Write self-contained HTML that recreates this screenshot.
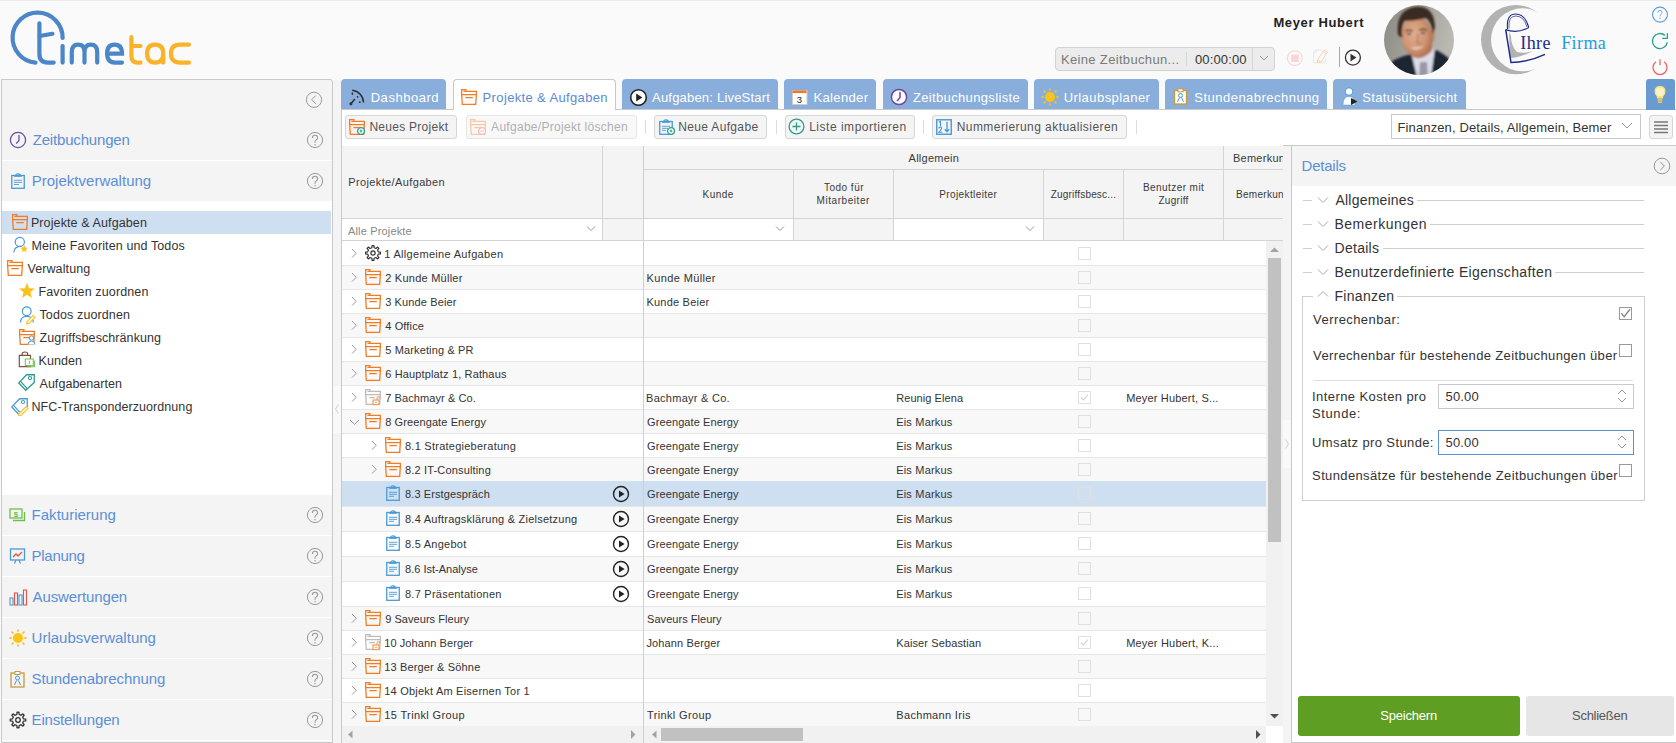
<!DOCTYPE html><html><head><meta charset="utf-8"><style>
*{box-sizing:border-box;margin:0;padding:0}
html,body{width:1676px;height:743px;overflow:hidden;background:#fafafa;font-family:"Liberation Sans",sans-serif;color:#333;position:relative}
.a{position:absolute}
.t{position:absolute;white-space:nowrap;line-height:1}
svg{position:absolute;overflow:visible}
</style></head><body><div class="a" style="left:0px;top:0px;width:1676px;height:1px;background:#ececec"></div><svg style="left:0px;top:0px" width="200" height="75" viewBox="0 0 200 75"><g fill="none" stroke-linecap="round" stroke-width="4.2">
<path d="M35.5 62.6 A25 25 0 1 1 62.6 38" stroke="#4a86c8"/>
<path d="M39.4 23.3 V54 Q39.4 62.6 48 62.6 H53.7" stroke="#4a86c8"/>
<path d="M39.6 36 L52.5 33.8" stroke="#4a86c8"/>
<path d="M62.6 46 V62.6" stroke="#4a86c8"/>
<path d="M71.8 62.6 V52 Q71.8 44.6 78.2 44.6 Q84.5 44.6 84.5 52 V62.6 M84.5 52 Q84.5 44.6 90.8 44.6 Q97.2 44.6 97.2 52 V62.6" stroke="#4a86c8"/>
<path d="M107.2 53.6 H122 Q122 44.6 114.6 44.6 Q107.1 44.6 107.1 53.6 Q107.1 62.6 115 62.6 H122" stroke="#4a86c8"/>
<path d="M131.4 37.2 V56 Q131.4 62.6 138 62.6 H140.5 M131.4 46 H140.5" stroke="#fbb22b"/>
<path d="M163.2 53.6 Q163.2 44.6 155.2 44.6 Q147.1 44.6 147.1 53.6 Q147.1 62.6 155.2 62.6 Q163.2 62.6 163.2 53.6 V62.6" stroke="#fbb22b"/>
<path d="M189 44.6 H180 Q171 44.6 171 53.6 Q171 62.6 180 62.6 H189" stroke="#fbb22b"/>
</g></svg><div class="t" style="left:1273.40px;top:15.99px;font-size:13px;color:#222;font-weight:bold;letter-spacing:0.636px;">Meyer Hubert</div><div class="a" style="left:1055px;top:47px;width:220px;height:24px;background:#ececec;border:1px solid #d2d2d2;border-radius:4px"></div><div class="a" style="left:1186px;top:52px;width:1px;height:14px;background:#d6d6d6"></div><div class="a" style="left:1252px;top:48px;width:1px;height:22px;background:#d6d6d6"></div><div class="t" style="left:1061.00px;top:52.99px;font-size:13px;color:#7a7a7a;font-weight:normal;letter-spacing:0.333px;">Keine Zeitbuchun...</div><div class="t" style="left:1195.00px;top:52.99px;font-size:13px;color:#333;font-weight:normal;letter-spacing:0.143px;">00:00:00</div><svg style="left:1257px;top:51px" width="14" height="14" viewBox="0 0 14 14"><path d="M3 5 L7 9 L11 5" fill="none" stroke="#999" stroke-width="1"/></svg><svg style="left:1286px;top:50px" width="17" height="17" viewBox="0 0 17 17"><circle cx="8.8" cy="8.2" r="7.4" fill="none" stroke="#f8d3d6" stroke-width="1.1"/><rect x="5.2" y="4.6" width="7.6" height="7.4" fill="#f7d6d9"/></svg><svg style="left:1312px;top:49px" width="17" height="17" viewBox="0 0 17 17"><path d="M1.7 13.8 V3.2 L4 1 H9.5 M1.7 3.2 H4 V1 M1.7 13.8 H13.6 V9.5" fill="none" stroke="#e8e8e8" stroke-width="1"/><path d="M5.2 13.5 L5.6 10.8 L12 1 L15.4 3.2 L9 13 Z M5.6 10.8 L9 13 M11 2.6 L14.4 4.8" fill="none" stroke="#f8cfae" stroke-width="0.9"/></svg><div class="a" style="left:1339px;top:47px;width:1px;height:20px;background:#a8a8a8"></div><svg style="left:1344px;top:49px" width="18" height="18" viewBox="0 0 18 18"><circle cx="8.9" cy="8.6" r="7.5" fill="none" stroke="#333" stroke-width="1.3"/><path d="M6.5 4.8 L12.4 8.6 L6.5 12.4 Z" fill="#333"/></svg><svg style="left:1384px;top:5px" width="70" height="70" viewBox="0 0 70 70"><defs><clipPath id="avc"><circle cx="35" cy="35" r="35"/></clipPath>
<filter id="blr" x="-20%" y="-20%" width="140%" height="140%"><feGaussianBlur stdDeviation="0.9"/></filter>
<linearGradient id="avbg" x1="0" y1="0" x2="1" y2="0.3"><stop offset="0" stop-color="#8a8982"/><stop offset="0.55" stop-color="#a5a49c"/><stop offset="1" stop-color="#b9b8b1"/></linearGradient>
<radialGradient id="skin" cx="0.42" cy="0.42" r="0.65"><stop offset="0" stop-color="#e2ae8e"/><stop offset="0.6" stop-color="#cf9472"/><stop offset="1" stop-color="#a76a4e"/></radialGradient></defs>
<g clip-path="url(#avc)"><rect width="70" height="70" fill="url(#avbg)"/>
<g filter="url(#blr)">
<path d="M0 72 L4 60 Q10 53 27 49 L35 62 L50 44 Q64 50 70 60 L70 72 Z" fill="#1d2631"/>
<path d="M27 47 L33 72 L47 72 L51 43 Q40 50 27 47 Z" fill="#dadde7"/>
<path d="M36 57 L43 57 L44 72 L35 72 Z" fill="#9a97a9"/>
<path d="M29 42 L29 52 Q38 56 48 46 L48 36 Z" fill="#b97a5a"/>
<ellipse cx="47.5" cy="31" rx="3" ry="6" fill="#c08264"/>
<ellipse cx="33" cy="32" rx="15.5" ry="20.5" fill="url(#skin)" transform="rotate(-8 33 32)"/>
<path d="M14 30 Q11 6 30 2 Q50 -1 51 22 L49 29 Q47 16 42 13 Q32 16 20 16 Q17 22 18.5 33 Z" fill="#3b2a20"/>
<path d="M21 26 Q25 24.5 29 26 M35 25 Q39 23.5 43 25" stroke="#4a3325" stroke-width="1.3" fill="none"/>
<ellipse cx="25" cy="29" rx="2.2" ry="1.1" fill="#3a4a6e"/><ellipse cx="39" cy="28" rx="2.2" ry="1.1" fill="#3a4a6e"/>
<path d="M34 29 L33 38 Q35 40 37 38" stroke="#a86a4c" stroke-width="1" fill="none"/>
<path d="M26 42 Q33 47 40 41 Q33 43.5 26 42 Z" fill="#f1e3dc"/>
</g></g></svg><svg style="left:1475px;top:0px" width="140" height="80" viewBox="0 0 140 80"><defs><mask id="mm"><rect width="140" height="80" fill="#fff"/><circle cx="47.5" cy="39.8" r="31.5" fill="#000"/></mask></defs>
<circle cx="40.7" cy="39.6" r="34.7" fill="#b2b2b2" mask="url(#mm)"/>
<path d="M35 58 Q45 58 58 51 Q50 54 42 52 Q36 46 36 36 L34 32 Z" fill="#b2b2b2"/>
<path d="M32.5 29 Q31 14 40.8 14 Q50 14 53.8 27.5" fill="none" stroke="#1c2a8a" stroke-width="1.1"/>
<path d="M34 28.5 Q33 16 40.8 16 Q49 16 52 27" fill="none" stroke="#1c2a8a" stroke-width="0.7"/>
<path d="M30.7 29.6 Q42 34 53.8 27.5" fill="none" stroke="#1c2a8a" stroke-width="1.3"/>
<path d="M30.7 29.6 L36 62.5 Q54 62 70 54.4" fill="none" stroke="#1c2a8a" stroke-width="1.5"/></svg><div class="t" style="left:1520.30px;top:33.75px;font-size:18px;color:#1c2a8a;font-weight:normal;letter-spacing:0.367px;font-family:'Liberation Serif',serif;">Ihre</div><div class="t" style="left:1561.20px;top:33.75px;font-size:18px;color:#1aa0e0;font-weight:normal;letter-spacing:0.400px;font-family:'Liberation Serif',serif;">Firma</div><svg style="left:1651px;top:6px" width="18" height="18" viewBox="0 0 18 18"><circle cx="9" cy="8.6" r="7.5" fill="none" stroke="#5a9fde" stroke-width="1.1"/><path d="M6.9 6.6 Q6.9 4.4 9 4.4 Q11.1 4.4 11.1 6.4 Q11.1 7.6 9.9 8.3 Q9 8.8 9 10 V10.4" fill="none" stroke="#7ab2e6" stroke-width="1"/><circle cx="9" cy="12.2" r="0.7" fill="#7ab2e6"/></svg><svg style="left:1651px;top:32px" width="18" height="18" viewBox="0 0 18 18"><path d="M16.3 10.3 A7.5 7.5 0 1 1 14 3.5" fill="none" stroke="#2a9d8f" stroke-width="1.3"/><path d="M16.4 1.3 V6.4 H11.2" fill="none" stroke="#2a9d8f" stroke-width="1.3"/></svg><svg style="left:1651px;top:58px" width="18" height="18" viewBox="0 0 18 18"><path d="M5 3.8 A7 7 0 1 0 13 3.8" fill="none" stroke="#ea6a6a" stroke-width="1.3"/><path d="M9 1.2 V7.2" stroke="#ea6a6a" stroke-width="1.3"/></svg><div class="a" style="left:1px;top:79px;width:332px;height:664px;background:#f4f4f4;border:1px solid #c9c9c9;border-radius:0 3px 0 0"></div><svg style="left:305px;top:91px" width="18" height="18" viewBox="0 0 18 18"><circle cx="9" cy="8.8" r="7.6" fill="none" stroke="#999" stroke-width="1"/><path d="M10.8 4.6 L6.6 8.8 L10.8 13" fill="none" stroke="#999" stroke-width="1"/></svg><svg style="left:9px;top:131px" width="18" height="18" viewBox="0 0 18 18"><circle cx="9" cy="9" r="7.6" fill="none" stroke="#6a4a9e" stroke-width="1.25"/><path d="M10 4 V9.5 L7.2 12.6" fill="none" stroke="#6a4a9e" stroke-width="1.25"/></svg><div class="t" style="left:32.70px;top:132.49px;font-size:15px;color:#5b8fd6;font-weight:normal;letter-spacing:-0.175px;">Zeitbuchungen</div><svg style="left:306px;top:131px" width="18" height="18" viewBox="0 0 18 18"><circle cx="9" cy="9" r="7.6" fill="none" stroke="#999" stroke-width="1"/><path d="M6.4 6.9 Q6.4 4.3 9 4.3 Q11.6 4.3 11.6 6.7 Q11.6 8.2 10 9.1 Q9 9.7 9 11.1 V11.7" fill="none" stroke="#999" stroke-width="1.1"/><circle cx="9" cy="13.7" r="0.75" fill="#999"/></svg><div class="a" style="left:2px;top:160px;width:330px;height:1px;background:#fff"></div><svg style="left:11px;top:173px" width="14" height="16" viewBox="0 0 14 16"><rect x="0.75" y="2.5" width="12.5" height="12.8" fill="none" stroke="#4a9ad8" stroke-width="1.3"/><path d="M3.2 3.2 H10.8" stroke="#4a9ad8" stroke-width="1.3"/><path d="M4.6 3 Q4.6 0.8 7 0.8 Q9.4 0.8 9.4 3" fill="none" stroke="#4a9ad8" stroke-width="1.2"/><path d="M3 7.3 H11 M3 9.4 H11 M3 11.5 H8" stroke="#4a9ad8" stroke-width="0.9"/></svg><div class="t" style="left:31.70px;top:173.49px;font-size:15px;color:#5b8fd6;font-weight:normal;letter-spacing:0.019px;">Projektverwaltung</div><svg style="left:306px;top:172px" width="18" height="18" viewBox="0 0 18 18"><circle cx="9" cy="9" r="7.6" fill="none" stroke="#999" stroke-width="1"/><path d="M6.4 6.9 Q6.4 4.3 9 4.3 Q11.6 4.3 11.6 6.7 Q11.6 8.2 10 9.1 Q9 9.7 9 11.1 V11.7" fill="none" stroke="#999" stroke-width="1.1"/><circle cx="9" cy="13.7" r="0.75" fill="#999"/></svg><div class="a" style="left:2px;top:201px;width:330px;height:294px;background:#fff"></div><div class="a" style="left:2px;top:211px;width:329px;height:23px;background:#cfdff2"></div><svg style="left:12px;top:214px" width="16" height="16" viewBox="0 0 16 16"><g fill="none" stroke="#f47b20" stroke-width="1.3"><path d="M0.65 5 V0.65 H4.9 V2.3"/><path d="M2.4 2.3 H15.35 V5"/><path d="M0.65 5.6 H15.35 L14.7 15.3 H1.3 Z"/><path d="M4.3 8.6 H11.8"/></g></svg><div class="t" style="left:30.90px;top:216.71px;font-size:12.5px;color:#333;font-weight:normal;letter-spacing:0.111px;">Projekte &amp; Aufgaben</div><svg style="left:10px;top:236px" width="20" height="18" viewBox="0 0 20 18"><circle cx="9.8" cy="5.9" r="4.6" fill="none" stroke="#4a9ad8" stroke-width="1.2"/><path d="M3.8 16.4 Q4.3 10.4 11.5 10.2" fill="none" stroke="#4a9ad8" stroke-width="1.2"/><path d="M14.20 8.80 L15.28 11.41 L18.10 11.63 L15.95 13.47 L16.61 16.22 L14.20 14.75 L11.79 16.22 L12.45 13.47 L10.30 11.63 L13.12 11.41 Z" fill="#f9c31f"/></svg><div class="t" style="left:31.50px;top:239.71px;font-size:12.5px;color:#333;font-weight:normal;letter-spacing:0.112px;">Meine Favoriten und Todos</div><svg style="left:7px;top:260px" width="16" height="16" viewBox="0 0 16 16"><g fill="none" stroke="#f47b20" stroke-width="1.3"><path d="M0.65 5 V0.65 H4.9 V2.3"/><path d="M2.4 2.3 H15.35 V5"/><path d="M0.65 5.6 H15.35 L14.7 15.3 H1.3 Z"/><path d="M4.3 8.6 H11.8"/></g></svg><div class="t" style="left:27.40px;top:262.71px;font-size:12.5px;color:#333;font-weight:normal;letter-spacing:0.111px;">Verwaltung</div><svg style="left:18px;top:282px" width="18" height="18" viewBox="0 0 18 18"><path d="M9.00 0.80 L11.12 6.29 L16.99 6.60 L12.42 10.31 L13.94 16.00 L9.00 12.80 L4.06 16.00 L5.58 10.31 L1.01 6.60 L6.88 6.29 Z" fill="#f9c31f"/></svg><div class="t" style="left:38.50px;top:285.71px;font-size:12.5px;color:#333;font-weight:normal;letter-spacing:0.129px;">Favoriten zuordnen</div><svg style="left:18px;top:305px" width="18" height="18" viewBox="0 0 18 18"><circle cx="8.7" cy="6.3" r="4.4" fill="none" stroke="#4a9ad8" stroke-width="1.2"/><path d="M2.6 17.5 Q2.6 11.3 8.7 11.3 Q14.8 11.3 15.3 17.5" fill="none" stroke="#4a9ad8" stroke-width="1.2"/><path d="M9 16.8 L15 10.4 L17 12.2 L11 18.4 L8.6 18.8 Z" fill="#fff" stroke="#f9c31f" stroke-width="1.1"/></svg><div class="t" style="left:39.50px;top:308.71px;font-size:12.5px;color:#333;font-weight:normal;letter-spacing:0.115px;">Todos zuordnen</div><svg style="left:19px;top:329px" width="16" height="16" viewBox="0 0 16 16"><g fill="none" stroke="#f47b20" stroke-width="1.3"><path d="M0.65 5 V0.65 H4.9 V2.3"/><path d="M2.4 2.3 H15.35 V5"/><path d="M0.65 5.6 H15.35 L14.7 15.3 H1.3 Z"/><path d="M4.3 8.6 H11.8"/></g></svg><svg style="left:27px;top:335px" width="10" height="10" viewBox="0 0 10 10"><circle cx="4.5" cy="3" r="2.2" fill="#fff" stroke="#4a9ad8" stroke-width="1"/><path d="M1 9.5 Q1 6 4.5 6 Q8 6 8 9.5" fill="#fff" stroke="#4a9ad8" stroke-width="1"/></svg><div class="t" style="left:39.50px;top:331.71px;font-size:12.5px;color:#333;font-weight:normal;letter-spacing:0.079px;">Zugriffsbeschränkung</div><svg style="left:18px;top:351px" width="18" height="18" viewBox="0 0 18 18"><path d="M1.3 4.3 H12.5 V15.6 H1.3 Z" fill="none" stroke="#7a5243" stroke-width="1.2"/><path d="M4.2 4.3 V2.6 Q4.2 1 6.9 1 Q9.6 1 9.6 2.6 V4.3" fill="none" stroke="#7a5243" stroke-width="1.2"/><rect x="7.3" y="8" width="8" height="6.5" fill="#fff" stroke="#7cc35a" stroke-width="1.1"/><path d="M9 15.8 H16.6 V9.5" fill="none" stroke="#7cc35a" stroke-width="1.1"/><path d="M11.3 9.5 V13" stroke="#7cc35a" stroke-width="1"/></svg><div class="t" style="left:38.50px;top:354.71px;font-size:12.5px;color:#333;font-weight:normal;letter-spacing:0.080px;">Kunden</div><svg style="left:18px;top:374px" width="18" height="18" viewBox="0 0 18 18"><path d="M8.6 0.75 H16.25 V8.4 L7.7 16.25 L0.75 8.9 Z" fill="none" stroke="#2a9d8f" stroke-width="1.3"/><path d="M2.3 7.1 L9.2 14.6" stroke="#2a9d8f" stroke-width="1.2"/><circle cx="12" cy="4.1" r="1.6" fill="none" stroke="#2a9d8f" stroke-width="1.1"/></svg><div class="t" style="left:39.50px;top:377.71px;font-size:12.5px;color:#333;font-weight:normal;letter-spacing:0.042px;">Aufgabenarten</div><svg style="left:11px;top:398px" width="18" height="18" viewBox="0 0 18 18"><path d="M8.6 0.75 H16.25 V8.4 L7.7 16.25 L0.75 8.9 Z" fill="none" stroke="#4a9ad8" stroke-width="1.3"/><path d="M2.3 7.1 L9.2 14.6" stroke="#4a9ad8" stroke-width="1.2"/><circle cx="12" cy="4.1" r="1.6" fill="none" stroke="#4a9ad8" stroke-width="1.1"/><path d="M8 15.6 L15.2 8.6 L17 10.4 L9.8 17.4 L7.7 17.7 Z" fill="#fff" stroke="#f9c31f" stroke-width="1.1"/></svg><div class="t" style="left:31.50px;top:400.71px;font-size:12.5px;color:#333;font-weight:normal;letter-spacing:0.065px;">NFC-Transponderzuordnung</div><div class="t" style="left:31.60px;top:507.19px;font-size:15px;color:#5b8fd6;font-weight:normal;letter-spacing:0.009px;">Fakturierung</div><svg style="left:306px;top:505.5px" width="18" height="18" viewBox="0 0 18 18"><circle cx="9" cy="9" r="7.6" fill="none" stroke="#999" stroke-width="1"/><path d="M6.4 6.9 Q6.4 4.3 9 4.3 Q11.6 4.3 11.6 6.7 Q11.6 8.2 10 9.1 Q9 9.7 9 11.1 V11.7" fill="none" stroke="#999" stroke-width="1.1"/><circle cx="9" cy="13.7" r="0.75" fill="#999"/></svg><svg style="left:9px;top:505.5px" width="18" height="18" viewBox="0 0 18 18"><rect x="1" y="3" width="12" height="9" fill="none" stroke="#6cc04a" stroke-width="1.3"/><path d="M4 14.5 H15.5 V6" fill="none" stroke="#6cc04a" stroke-width="1.3"/><text x="7" y="10.5" font-size="8" text-anchor="middle" fill="#6cc04a" font-family="Liberation Sans" font-weight="bold">$</text></svg><div class="a" style="left:2px;top:535px;width:330px;height:1px;background:#fff"></div><div class="t" style="left:31.60px;top:548.19px;font-size:15px;color:#5b8fd6;font-weight:normal;letter-spacing:-0.283px;">Planung</div><svg style="left:306px;top:546.5px" width="18" height="18" viewBox="0 0 18 18"><circle cx="9" cy="9" r="7.6" fill="none" stroke="#999" stroke-width="1"/><path d="M6.4 6.9 Q6.4 4.3 9 4.3 Q11.6 4.3 11.6 6.7 Q11.6 8.2 10 9.1 Q9 9.7 9 11.1 V11.7" fill="none" stroke="#999" stroke-width="1.1"/><circle cx="9" cy="13.7" r="0.75" fill="#999"/></svg><svg style="left:9px;top:546.5px" width="18" height="18" viewBox="0 0 18 18"><rect x="1.5" y="2" width="14" height="11" fill="none" stroke="#4a9ad8" stroke-width="1.3"/><path d="M4 10 L7 7 L9 9 L13 5" fill="none" stroke="#e5534b" stroke-width="1.3"/><path d="M7 13 L5.5 16.5 M10 13 L11.5 16.5" stroke="#4a9ad8" stroke-width="1.2"/></svg><div class="a" style="left:2px;top:576px;width:330px;height:1px;background:#fff"></div><div class="t" style="left:32.60px;top:589.19px;font-size:15px;color:#5b8fd6;font-weight:normal;letter-spacing:-0.118px;">Auswertungen</div><svg style="left:306px;top:587.5px" width="18" height="18" viewBox="0 0 18 18"><circle cx="9" cy="9" r="7.6" fill="none" stroke="#999" stroke-width="1"/><path d="M6.4 6.9 Q6.4 4.3 9 4.3 Q11.6 4.3 11.6 6.7 Q11.6 8.2 10 9.1 Q9 9.7 9 11.1 V11.7" fill="none" stroke="#999" stroke-width="1.1"/><circle cx="9" cy="13.7" r="0.75" fill="#999"/></svg><svg style="left:9px;top:587.5px" width="18" height="18" viewBox="0 0 18 18"><rect x="1" y="10" width="3" height="7" fill="none" stroke="#4a9ad8" stroke-width="1.1"/><rect x="5.5" y="5" width="3" height="12" fill="none" stroke="#e5534b" stroke-width="1.1"/><rect x="10" y="7" width="3" height="10" fill="none" stroke="#4a9ad8" stroke-width="1.1"/><rect x="14.5" y="2" width="3" height="15" fill="none" stroke="#e5534b" stroke-width="1.1"/></svg><div class="a" style="left:2px;top:617px;width:330px;height:1px;background:#fff"></div><div class="t" style="left:31.60px;top:630.19px;font-size:15px;color:#5b8fd6;font-weight:normal;letter-spacing:0.006px;">Urlaubsverwaltung</div><svg style="left:306px;top:628.5px" width="18" height="18" viewBox="0 0 18 18"><circle cx="9" cy="9" r="7.6" fill="none" stroke="#999" stroke-width="1"/><path d="M6.4 6.9 Q6.4 4.3 9 4.3 Q11.6 4.3 11.6 6.7 Q11.6 8.2 10 9.1 Q9 9.7 9 11.1 V11.7" fill="none" stroke="#999" stroke-width="1.1"/><circle cx="9" cy="13.7" r="0.75" fill="#999"/></svg><svg style="left:9px;top:628.5px" width="18" height="18" viewBox="0 0 18 18"><circle cx="9" cy="9" r="5" fill="#fcc419"/><g stroke="#f5c02a" stroke-width="1.9" stroke-linecap="round"><path d="M9 1.2 V1.9 M9 16.1 V16.8 M1.2 9 H1.9 M16.1 9 H16.8 M3.2 3.2 L3.9 3.9 M14.1 14.1 L14.8 14.8 M3.2 14.8 L3.9 14.1 M14.1 3.9 L14.8 3.2"/></g></svg><div class="a" style="left:2px;top:658px;width:330px;height:1px;background:#fff"></div><div class="t" style="left:31.60px;top:671.19px;font-size:15px;color:#5b8fd6;font-weight:normal;letter-spacing:-0.088px;">Stundenabrechnung</div><svg style="left:306px;top:669.5px" width="18" height="18" viewBox="0 0 18 18"><circle cx="9" cy="9" r="7.6" fill="none" stroke="#999" stroke-width="1"/><path d="M6.4 6.9 Q6.4 4.3 9 4.3 Q11.6 4.3 11.6 6.7 Q11.6 8.2 10 9.1 Q9 9.7 9 11.1 V11.7" fill="none" stroke="#999" stroke-width="1.1"/><circle cx="9" cy="13.7" r="0.75" fill="#999"/></svg><svg style="left:9px;top:669.5px" width="18" height="18" viewBox="0 0 18 18"><rect x="2" y="3" width="13" height="14" fill="none" stroke="#c89a3a" stroke-width="1.3"/><rect x="6" y="1.5" width="5" height="3" fill="#fff" stroke="#c89a3a" stroke-width="1"/><circle cx="8.5" cy="8" r="2" fill="none" stroke="#4a9ad8" stroke-width="1"/><path d="M5.5 15 L7.5 10.5 M11.5 15 L9.5 10.5" stroke="#4a9ad8" stroke-width="1"/></svg><div class="a" style="left:2px;top:699px;width:330px;height:1px;background:#fff"></div><div class="t" style="left:31.60px;top:712.19px;font-size:15px;color:#5b8fd6;font-weight:normal;letter-spacing:-0.167px;">Einstellungen</div><svg style="left:306px;top:710.5px" width="18" height="18" viewBox="0 0 18 18"><circle cx="9" cy="9" r="7.6" fill="none" stroke="#999" stroke-width="1"/><path d="M6.4 6.9 Q6.4 4.3 9 4.3 Q11.6 4.3 11.6 6.7 Q11.6 8.2 10 9.1 Q9 9.7 9 11.1 V11.7" fill="none" stroke="#999" stroke-width="1.1"/><circle cx="9" cy="13.7" r="0.75" fill="#999"/></svg><svg style="left:9px;top:710.5px" width="18" height="18" viewBox="0 0 18 18"><path d="M7.85 3.52 L8.04 1.26 L9.96 1.26 L10.15 3.52 L12.07 4.31 L13.79 2.85 L15.15 4.21 L13.69 5.93 L14.48 7.85 L16.74 8.04 L16.74 9.96 L14.48 10.15 L13.69 12.07 L15.15 13.79 L13.79 15.15 L12.07 13.69 L10.15 14.48 L9.96 16.74 L8.04 16.74 L7.85 14.48 L5.93 13.69 L4.21 15.15 L2.85 13.79 L4.31 12.07 L3.52 10.15 L1.26 9.96 L1.26 8.04 L3.52 7.85 L4.31 5.93 L2.85 4.21 L4.21 2.85 L5.93 4.31 Z" fill="none" stroke="#333" stroke-width="1.3" stroke-linejoin="round"/><circle cx="9" cy="9" r="2.3" fill="none" stroke="#333" stroke-width="1.3"/></svg><div class="a" style="left:2px;top:740px;width:330px;height:1px;background:#fff"></div><div class="a" style="left:341px;top:109px;width:1335px;height:1px;background:#c9c9c9"></div><div class="a" style="left:341px;top:79px;width:105px;height:30px;background:#8aaedc;border-radius:4px 4px 0 0"></div><div class="t" style="left:370.70px;top:90.99px;font-size:13px;color:#fff;font-weight:normal;letter-spacing:0.538px;">Dashboard</div><svg style="left:345px;top:85px" width="25" height="25" viewBox="0 0 25 25"><g fill="none" stroke="#2f2f2f" stroke-width="1.5"><path d="M7.2 5.2 A12.5 12.5 0 0 1 18.5 17.5"/><path d="M5.9 18.8 L9.8 14.1"/><path d="M7.4 7.6 V9.8"/></g><circle cx="5.9" cy="18.8" r="1.5" fill="#2f2f2f"/><circle cx="12.6" cy="11.8" r="0.9" fill="#2f2f2f"/><circle cx="14.8" cy="17.2" r="0.9" fill="#2f2f2f"/></svg><div class="a" style="left:453px;top:79px;width:163px;height:31px;background:#fff;border:1px solid #c9c9c9;border-bottom:none;border-radius:4px 4px 0 0"></div><div class="t" style="left:482.60px;top:90.99px;font-size:13px;color:#5b8bd0;font-weight:normal;letter-spacing:0.356px;">Projekte &amp; Aufgaben</div><svg style="left:461px;top:89px" width="16" height="16" viewBox="0 0 16 16"><g fill="none" stroke="#f47b20" stroke-width="1.3"><path d="M0.65 5 V0.65 H4.9 V2.3"/><path d="M2.4 2.3 H15.35 V5"/><path d="M0.65 5.6 H15.35 L14.7 15.3 H1.3 Z"/><path d="M4.3 8.6 H11.8"/></g></svg><div class="a" style="left:622px;top:79px;width:156px;height:30px;background:#8aaedc;border-radius:4px 4px 0 0"></div><div class="t" style="left:652.00px;top:90.99px;font-size:13px;color:#fff;font-weight:normal;letter-spacing:0.206px;">Aufgaben: LiveStart</div><svg style="left:628.5px;top:87.5px" width="19" height="19" viewBox="0 0 19 19"><circle cx="9.5" cy="9.5" r="7.8" fill="#fff" stroke="#222" stroke-width="1.6"/><path d="M7.2 5.5 L13.4 9.5 L7.2 13.5 Z" fill="#222"/></svg><div class="a" style="left:784px;top:79px;width:92px;height:30px;background:#8aaedc;border-radius:4px 4px 0 0"></div><div class="t" style="left:813.40px;top:90.99px;font-size:13px;color:#fff;font-weight:normal;letter-spacing:0.371px;">Kalender</div><svg style="left:792px;top:89.5px" width="16" height="16" viewBox="0 0 16 16"><rect x="0.5" y="0.5" width="14.5" height="14" fill="#fff" stroke="#ccc" stroke-width="1"/><rect x="0.5" y="0.5" width="14" height="2.6" fill="#f07a24"/><text x="7.5" y="13" font-size="9.5" text-anchor="middle" fill="#222" font-family="Liberation Sans">3</text></svg><div class="a" style="left:883px;top:79px;width:145px;height:30px;background:#8aaedc;border-radius:4px 4px 0 0"></div><div class="t" style="left:913.00px;top:90.99px;font-size:13px;color:#fff;font-weight:normal;letter-spacing:0.344px;">Zeitbuchungsliste</div><svg style="left:889.6px;top:87.8px" width="18" height="18" viewBox="0 0 18 18"><circle cx="9" cy="9" r="7.6" fill="#fff" stroke="#6a4a9e" stroke-width="1.5"/><path d="M10 4 V9.5 L7 13" fill="none" stroke="#6a4a9e" stroke-width="1.5"/></svg><div class="a" style="left:1034px;top:79px;width:125px;height:30px;background:#8aaedc;border-radius:4px 4px 0 0"></div><div class="t" style="left:1063.70px;top:90.99px;font-size:13px;color:#fff;font-weight:normal;letter-spacing:0.442px;">Urlaubsplaner</div><svg style="left:1041px;top:88px" width="18" height="18" viewBox="0 0 18 18"><circle cx="9" cy="9" r="5" fill="#fcc419"/><g stroke="#f5c02a" stroke-width="1.9" stroke-linecap="round"><path d="M9 1.2 V1.9 M9 16.1 V16.8 M1.2 9 H1.9 M16.1 9 H16.8 M3.2 3.2 L3.9 3.9 M14.1 14.1 L14.8 14.8 M3.2 14.8 L3.9 14.1 M14.1 3.9 L14.8 3.2"/></g></svg><div class="a" style="left:1165px;top:79px;width:162px;height:30px;background:#8aaedc;border-radius:4px 4px 0 0"></div><div class="t" style="left:1194.30px;top:90.99px;font-size:13px;color:#fff;font-weight:normal;letter-spacing:0.481px;">Stundenabrechnung</div><svg style="left:1173px;top:88px" width="18" height="18" viewBox="0 0 18 18"><rect x="1.5" y="2.5" width="12" height="13.5" fill="#fff" stroke="#c89a3a" stroke-width="1.3"/><rect x="5" y="0.8" width="5" height="3" fill="#fff" stroke="#c89a3a" stroke-width="1"/><circle cx="7.5" cy="7.5" r="2" fill="none" stroke="#4a9ad8" stroke-width="1"/><path d="M4.5 14 L6.5 9.5 M10.5 14 L8.5 9.5" stroke="#4a9ad8" stroke-width="1"/></svg><div class="a" style="left:1333px;top:79px;width:133px;height:30px;background:#8aaedc;border-radius:4px 4px 0 0"></div><div class="t" style="left:1362.20px;top:90.99px;font-size:13px;color:#fff;font-weight:normal;letter-spacing:0.379px;">Statusübersicht</div><svg style="left:1342px;top:87px" width="18" height="19" viewBox="0 0 18 19"><circle cx="7" cy="4.5" r="3.8" fill="#fff" stroke="#4a9ad8" stroke-width="1"/><path d="M1 18 Q1 9.5 7 9.5 Q13 9.5 13 18 Z" fill="#fff" stroke="#4a9ad8" stroke-width="0.5"/><path d="M9 11 L15.5 14.5 L9 18 Z" fill="#222"/></svg><div class="a" style="left:1646px;top:79px;width:29px;height:31px;background:#6a9ad2;border-radius:3px 3px 0 0"></div><svg style="left:1652px;top:85px" width="16" height="19" viewBox="0 0 16 19"><path d="M8 1 Q13.5 1 13.5 6.5 Q13.5 9.5 11 12 V13.5 H5 V12 Q2.5 9.5 2.5 6.5 Q2.5 1 8 1 Z" fill="#fbe38a"/><path d="M8 2.5 Q12 2.5 12 6.5 Q12 9 10 11 H6 Q4 9 4 6.5 Q4 2.5 8 2.5 Z" fill="#fff3c4"/><rect x="5.5" y="14.2" width="5" height="1.6" fill="#f2c94c"/><rect x="6" y="16.4" width="4" height="1.6" fill="#f2c94c"/></svg><div class="a" style="left:341px;top:110px;width:1335px;height:36px;background:#fff;border-left:1px solid #c9c9c9"></div><div class="a" style="left:341px;top:145px;width:1335px;height:1px;background:#c9c9c9"></div><div class="a" style="left:345px;top:115px;width:112px;height:24px;background:#f4f4f4;border:1px solid #d6d6d6;border-radius:3px"></div><div class="t" style="left:369.40px;top:120.64px;font-size:12px;color:#555;font-weight:normal;letter-spacing:0.275px;">Neues Projekt</div><div class="a" style="left:466px;top:115px;width:171px;height:24px;background:#f4f4f4;border:1px solid #d6d6d6;border-radius:3px;opacity:.6"></div><div class="t" style="left:491.10px;top:120.64px;font-size:12px;color:#b0b0b0;font-weight:normal;letter-spacing:0.291px;">Aufgabe/Projekt löschen</div><div class="a" style="left:654px;top:115px;width:113px;height:24px;background:#f4f4f4;border:1px solid #d6d6d6;border-radius:3px"></div><div class="t" style="left:678.30px;top:120.64px;font-size:12px;color:#555;font-weight:normal;letter-spacing:0.336px;">Neue Aufgabe</div><div class="a" style="left:785px;top:115px;width:130px;height:24px;background:#f4f4f4;border:1px solid #d6d6d6;border-radius:3px"></div><div class="t" style="left:809.20px;top:120.64px;font-size:12px;color:#555;font-weight:normal;letter-spacing:0.512px;">Liste importieren</div><div class="a" style="left:932px;top:115px;width:195px;height:24px;background:#f4f4f4;border:1px solid #d6d6d6;border-radius:3px"></div><div class="t" style="left:956.70px;top:120.64px;font-size:12px;color:#555;font-weight:normal;letter-spacing:0.440px;">Nummerierung aktualisieren</div><div class="a" style="left:645px;top:120px;width:1px;height:14px;background:#ddd"></div><div class="a" style="left:776px;top:120px;width:1px;height:14px;background:#ddd"></div><div class="a" style="left:923px;top:120px;width:1px;height:14px;background:#ddd"></div><div class="a" style="left:1136px;top:120px;width:1px;height:14px;background:#ddd"></div><svg style="left:349px;top:119px" width="16" height="16" viewBox="0 0 16 16"><g fill="none" stroke="#f47b20" stroke-width="1.3"><path d="M0.65 5 V0.65 H4.9 V2.3"/><path d="M2.4 2.3 H15.35 V5"/><path d="M0.65 5.6 H15.35 L14.7 15.3 H1.3 Z"/><path d="M4.3 8.6 H11.8"/></g></svg><svg style="left:356px;top:126px" width="10" height="10" viewBox="0 0 10 10"><circle cx="5" cy="5" r="3.4" fill="#fff" stroke="#2e9c8a" stroke-width="1.3"/><circle cx="5" cy="5" r="1.4" fill="#5bb5a8"/></svg><svg style="left:470px;top:119px" width="16" height="16" viewBox="0 0 16 16"><g fill="none" stroke="#f9c9a6" stroke-width="1.3"><path d="M0.65 5 V0.65 H4.9 V2.3"/><path d="M2.4 2.3 H15.35 V5"/><path d="M0.65 5.6 H15.35 L14.7 15.3 H1.3 Z"/><path d="M4.3 8.6 H11.8"/></g></svg><svg style="left:477px;top:126px" width="10" height="10" viewBox="0 0 10 10"><circle cx="5" cy="5" r="3.4" fill="#fff" stroke="#f6b9bf" stroke-width="1.3"/><path d="M3.2 5 H6.8" stroke="#f6b9bf" stroke-width="1.1"/></svg><svg style="left:659px;top:119px" width="16" height="16" viewBox="0 0 16 16"><rect x="0.75" y="2.5" width="12.5" height="12.8" fill="none" stroke="#4a9ad8" stroke-width="1.3"/><path d="M3.2 3.2 H10.8" stroke="#4a9ad8" stroke-width="1.3"/><path d="M4.6 3 Q4.6 0.8 7 0.8 Q9.4 0.8 9.4 3" fill="none" stroke="#4a9ad8" stroke-width="1.2"/><path d="M3 7.3 H11 M3 9.3 H9 M3 11.3 H7" stroke="#4a9ad8" stroke-width="0.9"/></svg><svg style="left:666px;top:126px" width="10" height="10" viewBox="0 0 10 10"><circle cx="5" cy="5" r="3.4" fill="#fff" stroke="#2e9c8a" stroke-width="1.3"/><circle cx="5" cy="5" r="1.4" fill="#5bb5a8"/></svg><svg style="left:788px;top:118px" width="17" height="17" viewBox="0 0 17 17"><circle cx="8.5" cy="8.5" r="7.4" fill="none" stroke="#2e9c8a" stroke-width="1.3"/><path d="M8.5 4.5 V12.5 M4.5 8.5 H12.5" stroke="#2e9c8a" stroke-width="1.3"/></svg><svg style="left:936px;top:119px" width="16" height="16" viewBox="0 0 16 16"><rect x="0.75" y="0.75" width="14.5" height="14.5" fill="none" stroke="#4a9ad8" stroke-width="1.4"/><path d="M2.9 3.3 L4.5 2.2 V7.3" fill="none" stroke="#4a9ad8" stroke-width="1.1"/><path d="M2.7 9.3 Q3 8.1 4.3 8.1 Q5.7 8.1 5.6 9.5 Q5.4 10.6 2.8 13.3 H6.2" fill="none" stroke="#4a9ad8" stroke-width="1.1"/><path d="M11 2.8 V12.6 M8.8 10.2 L11 12.7 L13.2 10.2" fill="none" stroke="#4a9ad8" stroke-width="1.3"/></svg><div class="a" style="left:1391px;top:114px;width:250px;height:25px;background:#fff;border:1px solid #c9c9c9"></div><div class="t" style="left:1397.50px;top:120.79px;font-size:13px;color:#333;font-weight:normal;letter-spacing:0.124px;width:214px;overflow:hidden;padding-bottom:4px;">Finanzen, Details, Allgemein, Bemerkungen</div><svg style="left:1621px;top:121px" width="12" height="10" viewBox="0 0 12 10"><path d="M1 2 L6 7 L11 2" fill="none" stroke="#999" stroke-width="1"/></svg><div class="a" style="left:1649px;top:115px;width:24px;height:24px;background:#f4f4f4;border:1px solid #d6d6d6;border-radius:3px"></div><svg style="left:1653px;top:120px" width="16" height="14" viewBox="0 0 16 14"><path d="M1 2 H15 M1 5.5 H15 M1 9 H15 M1 12.5 H15" stroke="#777" stroke-width="1.6"/></svg><div class="a" style="left:333px;top:80px;width:8px;height:663px;background:#f4f4f4"></div><div class="a" style="left:1283px;top:146px;width:8px;height:597px;background:#f4f4f4"></div><div class="a" style="left:333px;top:386px;width:8px;height:47px;background:#f9f9f9"></div><svg style="left:334px;top:403px" width="6" height="12" viewBox="0 0 6 12"><path d="M4.5 1.5 L1.5 6 L4.5 10.5" fill="none" stroke="#d0d0d0" stroke-width="1"/></svg><div class="a" style="left:1283px;top:420px;width:8px;height:48px;background:#f9f9f9"></div><div class="a" style="left:341px;top:145px;width:942px;height:598px;background:#fff;border-left:1px solid #c9c9c9"></div><div class="a" style="left:342px;top:146px;width:941px;height:73px;background:#f4f4f4"></div><div class="a" style="left:342px;top:218px;width:941px;height:1px;background:#d4d4d4"></div><div class="a" style="left:643px;top:169px;width:640px;height:1px;background:#d4d4d4"></div><div class="a" style="left:602px;top:146px;width:1px;height:95px;background:#d4d4d4"></div><div class="a" style="left:643px;top:146px;width:1px;height:597px;background:#cfcfcf"></div><div class="a" style="left:793px;top:170px;width:1px;height:71px;background:#d4d4d4"></div><div class="a" style="left:893px;top:170px;width:1px;height:71px;background:#d4d4d4"></div><div class="a" style="left:1043px;top:170px;width:1px;height:71px;background:#d4d4d4"></div><div class="a" style="left:1123px;top:170px;width:1px;height:71px;background:#d4d4d4"></div><div class="a" style="left:1223px;top:146px;width:1px;height:95px;background:#d4d4d4"></div><div class="a" style="left:342px;top:219px;width:260px;height:21px;background:#fff"></div><div class="a" style="left:603px;top:219px;width:40px;height:21px;background:#f4f4f4"></div><div class="a" style="left:644px;top:219px;width:149px;height:21px;background:#fff"></div><div class="a" style="left:794px;top:219px;width:99px;height:21px;background:#f4f4f4"></div><div class="a" style="left:894px;top:219px;width:149px;height:21px;background:#fff"></div><div class="a" style="left:1044px;top:219px;width:239px;height:21px;background:#f4f4f4"></div><div class="a" style="left:793px;top:219px;width:1px;height:21px;background:#d4d4d4"></div><div class="a" style="left:893px;top:219px;width:1px;height:21px;background:#d4d4d4"></div><div class="a" style="left:1043px;top:219px;width:1px;height:21px;background:#d4d4d4"></div><div class="a" style="left:1123px;top:219px;width:1px;height:21px;background:#d4d4d4"></div><div class="a" style="left:1223px;top:219px;width:1px;height:21px;background:#d4d4d4"></div><div class="a" style="left:342px;top:240px;width:941px;height:1px;background:#d4d4d4"></div><svg style="left:586px;top:225px" width="10" height="7" viewBox="0 0 10 7"><path d="M1 1.5 L5 5.5 L9 1.5" fill="none" stroke="#999" stroke-width="1"/></svg><svg style="left:775px;top:225px" width="10" height="7" viewBox="0 0 10 7"><path d="M1 1.5 L5 5.5 L9 1.5" fill="none" stroke="#999" stroke-width="1"/></svg><svg style="left:1025px;top:225px" width="10" height="7" viewBox="0 0 10 7"><path d="M1 1.5 L5 5.5 L9 1.5" fill="none" stroke="#999" stroke-width="1"/></svg><div class="t" style="left:348.30px;top:177.48px;font-size:11px;color:#3a3a3a;font-weight:normal;letter-spacing:0.369px;">Projekte/Aufgaben</div><div class="t" style="left:348.00px;top:225.58px;font-size:11px;color:#888;font-weight:normal;letter-spacing:0.158px;">Alle Projekte</div><div class="t" style="left:908.60px;top:152.98px;font-size:11px;color:#3a3a3a;font-weight:normal;letter-spacing:0.250px;">Allgemein</div><div class="t" style="left:1233.00px;top:152.98px;font-size:11px;color:#3a3a3a;font-weight:normal;width:50px;overflow:hidden;letter-spacing:0.25px;">Bemerkungen</div><div class="t" style="left:702.60px;top:189.53px;font-size:10px;color:#3a3a3a;font-weight:normal;letter-spacing:0.475px;">Kunde</div><div class="t" style="left:823.90px;top:182.73px;font-size:10px;color:#3a3a3a;font-weight:normal;letter-spacing:0.500px;">Todo für</div><div class="t" style="left:816.60px;top:195.53px;font-size:10px;color:#3a3a3a;font-weight:normal;letter-spacing:0.550px;">Mitarbeiter</div><div class="t" style="left:939.20px;top:189.53px;font-size:10px;color:#3a3a3a;font-weight:normal;letter-spacing:0.400px;">Projektleiter</div><div class="t" style="left:1050.80px;top:189.53px;font-size:10px;color:#3a3a3a;font-weight:normal;letter-spacing:0.179px;">Zugriffsbesc...</div><div class="t" style="left:1142.90px;top:182.73px;font-size:10px;color:#3a3a3a;font-weight:normal;letter-spacing:0.436px;">Benutzer mit</div><div class="t" style="left:1158.40px;top:195.53px;font-size:10px;color:#3a3a3a;font-weight:normal;letter-spacing:0.300px;">Zugriff</div><div class="t" style="left:1236.00px;top:189.53px;font-size:10px;color:#3a3a3a;font-weight:normal;width:47px;overflow:hidden;letter-spacing:0.3px;">Bemerkungen</div><div class="a" style="left:342px;top:241px;width:924px;height:24px;background:#fff"></div><div class="a" style="left:342px;top:265px;width:924px;height:1px;background:#e6e6e6"></div><div class="a" style="left:342px;top:242px;width:924px;height:23px;background:#fff"></div><div class="a" style="left:342px;top:265px;width:924px;height:1px;background:#e6e6e6"></div><svg style="left:351px;top:248px" width="7" height="11" viewBox="0 0 7 11"><path d="M1 1 L5.2 5.3 L1 9.6" fill="none" stroke="#9a9a9a" stroke-width="1"/></svg><svg style="left:364px;top:244px" width="18" height="18" viewBox="0 0 18 18"><path d="M7.89 3.71 L8.07 1.56 L9.93 1.56 L10.11 3.71 L11.96 4.48 L13.61 3.08 L14.92 4.39 L13.52 6.04 L14.29 7.89 L16.44 8.07 L16.44 9.93 L14.29 10.11 L13.52 11.96 L14.92 13.61 L13.61 14.92 L11.96 13.52 L10.11 14.29 L9.93 16.44 L8.07 16.44 L7.89 14.29 L6.04 13.52 L4.39 14.92 L3.08 13.61 L4.48 11.96 L3.71 10.11 L1.56 9.93 L1.56 8.07 L3.71 7.89 L4.48 6.04 L3.08 4.39 L4.39 3.08 L6.04 4.48 Z" fill="none" stroke="#333" stroke-width="1.2" stroke-linejoin="round"/><circle cx="9" cy="9" r="2.1" fill="none" stroke="#333" stroke-width="1.2"/></svg><div class="t" style="left:384.20px;top:249.28px;font-size:11px;color:#333;font-weight:normal;letter-spacing:0.315px;">1 Allgemeine Aufgaben</div><svg style="left:1078px;top:247px" width="13" height="13" viewBox="0 0 13 13"><rect x="0.5" y="0.5" width="12" height="12" fill="none" stroke="#e0e0e0"/></svg><div class="a" style="left:342px;top:266px;width:924px;height:23px;background:#f8f8f8"></div><div class="a" style="left:342px;top:289px;width:924px;height:1px;background:#e6e6e6"></div><svg style="left:351px;top:272px" width="7" height="11" viewBox="0 0 7 11"><path d="M1 1 L5.2 5.3 L1 9.6" fill="none" stroke="#9a9a9a" stroke-width="1"/></svg><svg style="left:365px;top:269px" width="16" height="16" viewBox="0 0 16 16"><g fill="none" stroke="#f47b20" stroke-width="1.3"><path d="M0.65 5 V0.65 H4.9 V2.3"/><path d="M2.4 2.3 H15.35 V5"/><path d="M0.65 5.6 H15.35 L14.7 15.3 H1.3 Z"/><path d="M4.3 8.6 H11.8"/></g></svg><div class="t" style="left:385.20px;top:273.28px;font-size:11px;color:#333;font-weight:normal;letter-spacing:0.246px;">2 Kunde Müller</div><div class="t" style="left:646.50px;top:273.28px;font-size:11px;color:#333;font-weight:normal;letter-spacing:0.382px;">Kunde Müller</div><svg style="left:1078px;top:271px" width="13" height="13" viewBox="0 0 13 13"><rect x="0.5" y="0.5" width="12" height="12" fill="none" stroke="#e0e0e0"/></svg><div class="a" style="left:342px;top:290px;width:924px;height:23px;background:#fff"></div><div class="a" style="left:342px;top:313px;width:924px;height:1px;background:#e6e6e6"></div><svg style="left:351px;top:296px" width="7" height="11" viewBox="0 0 7 11"><path d="M1 1 L5.2 5.3 L1 9.6" fill="none" stroke="#9a9a9a" stroke-width="1"/></svg><svg style="left:365px;top:293px" width="16" height="16" viewBox="0 0 16 16"><g fill="none" stroke="#f47b20" stroke-width="1.3"><path d="M0.65 5 V0.65 H4.9 V2.3"/><path d="M2.4 2.3 H15.35 V5"/><path d="M0.65 5.6 H15.35 L14.7 15.3 H1.3 Z"/><path d="M4.3 8.6 H11.8"/></g></svg><div class="t" style="left:385.20px;top:297.28px;font-size:11px;color:#333;font-weight:normal;letter-spacing:0.125px;">3 Kunde Beier</div><div class="t" style="left:646.50px;top:297.28px;font-size:11px;color:#333;font-weight:normal;letter-spacing:0.210px;">Kunde Beier</div><svg style="left:1078px;top:295px" width="13" height="13" viewBox="0 0 13 13"><rect x="0.5" y="0.5" width="12" height="12" fill="none" stroke="#e0e0e0"/></svg><div class="a" style="left:342px;top:314px;width:924px;height:23px;background:#f8f8f8"></div><div class="a" style="left:342px;top:337px;width:924px;height:1px;background:#e6e6e6"></div><svg style="left:351px;top:320px" width="7" height="11" viewBox="0 0 7 11"><path d="M1 1 L5.2 5.3 L1 9.6" fill="none" stroke="#9a9a9a" stroke-width="1"/></svg><svg style="left:365px;top:317px" width="16" height="16" viewBox="0 0 16 16"><g fill="none" stroke="#f47b20" stroke-width="1.3"><path d="M0.65 5 V0.65 H4.9 V2.3"/><path d="M2.4 2.3 H15.35 V5"/><path d="M0.65 5.6 H15.35 L14.7 15.3 H1.3 Z"/><path d="M4.3 8.6 H11.8"/></g></svg><div class="t" style="left:385.20px;top:321.28px;font-size:11px;color:#333;font-weight:normal;letter-spacing:0.143px;">4 Office</div><svg style="left:1078px;top:319px" width="13" height="13" viewBox="0 0 13 13"><rect x="0.5" y="0.5" width="12" height="12" fill="none" stroke="#e0e0e0"/></svg><div class="a" style="left:342px;top:338px;width:924px;height:23px;background:#fff"></div><div class="a" style="left:342px;top:361px;width:924px;height:1px;background:#e6e6e6"></div><svg style="left:351px;top:344px" width="7" height="11" viewBox="0 0 7 11"><path d="M1 1 L5.2 5.3 L1 9.6" fill="none" stroke="#9a9a9a" stroke-width="1"/></svg><svg style="left:365px;top:341px" width="16" height="16" viewBox="0 0 16 16"><g fill="none" stroke="#f47b20" stroke-width="1.3"><path d="M0.65 5 V0.65 H4.9 V2.3"/><path d="M2.4 2.3 H15.35 V5"/><path d="M0.65 5.6 H15.35 L14.7 15.3 H1.3 Z"/><path d="M4.3 8.6 H11.8"/></g></svg><div class="t" style="left:385.20px;top:345.28px;font-size:11px;color:#333;font-weight:normal;letter-spacing:0.140px;">5 Marketing &amp; PR</div><svg style="left:1078px;top:343px" width="13" height="13" viewBox="0 0 13 13"><rect x="0.5" y="0.5" width="12" height="12" fill="none" stroke="#e0e0e0"/></svg><div class="a" style="left:342px;top:362px;width:924px;height:23px;background:#f8f8f8"></div><div class="a" style="left:342px;top:385px;width:924px;height:1px;background:#e6e6e6"></div><svg style="left:351px;top:368px" width="7" height="11" viewBox="0 0 7 11"><path d="M1 1 L5.2 5.3 L1 9.6" fill="none" stroke="#9a9a9a" stroke-width="1"/></svg><svg style="left:365px;top:365px" width="16" height="16" viewBox="0 0 16 16"><g fill="none" stroke="#f47b20" stroke-width="1.3"><path d="M0.65 5 V0.65 H4.9 V2.3"/><path d="M2.4 2.3 H15.35 V5"/><path d="M0.65 5.6 H15.35 L14.7 15.3 H1.3 Z"/><path d="M4.3 8.6 H11.8"/></g></svg><div class="t" style="left:385.20px;top:369.28px;font-size:11px;color:#333;font-weight:normal;letter-spacing:0.145px;">6 Hauptplatz 1, Rathaus</div><svg style="left:1078px;top:367px" width="13" height="13" viewBox="0 0 13 13"><rect x="0.5" y="0.5" width="12" height="12" fill="none" stroke="#e0e0e0"/></svg><div class="a" style="left:342px;top:386px;width:924px;height:23px;background:#fff"></div><div class="a" style="left:342px;top:409px;width:924px;height:1px;background:#e6e6e6"></div><svg style="left:351px;top:392px" width="7" height="11" viewBox="0 0 7 11"><path d="M1 1 L5.2 5.3 L1 9.6" fill="none" stroke="#9a9a9a" stroke-width="1"/></svg><svg style="left:365px;top:389px" width="16" height="16" viewBox="0 0 16 16"><g fill="none" stroke="#bdbdbd" stroke-width="1.3"><path d="M0.65 5 V0.65 H4.9 V2.3"/><path d="M2.4 2.3 H15.35 V5"/><path d="M0.65 5.6 H15.35 L14.7 15.3 H1.3 Z"/><path d="M4.3 8.6 H10"/></g><rect x="8" y="11" width="6" height="4.6" fill="#fff" stroke="#f39a5a" stroke-width="1.2"/><path d="M12 11 V9.5 Q12 7.8 13.5 7.8 Q15 7.8 15 9.5" fill="none" stroke="#f39a5a" stroke-width="1.1"/><path d="M10 13.3 H12" stroke="#f39a5a" stroke-width="1"/></svg><div class="t" style="left:385.20px;top:393.28px;font-size:11px;color:#333;font-weight:normal;letter-spacing:0.093px;">7 Bachmayr &amp; Co.</div><div class="t" style="left:646.10px;top:393.28px;font-size:11px;color:#333;font-weight:normal;letter-spacing:0.269px;">Bachmayr &amp; Co.</div><div class="t" style="left:896.20px;top:393.28px;font-size:11px;color:#333;font-weight:normal;letter-spacing:0.073px;">Reunig Elena</div><svg style="left:1078px;top:391px" width="13" height="13" viewBox="0 0 13 13"><rect x="0.5" y="0.5" width="12" height="12" fill="none" stroke="#e0e0e0"/><path d="M3 6.5 L5.5 9 L10 3.5" fill="none" stroke="#d0d0d0" stroke-width="1.1"/></svg><div class="t" style="left:1126.20px;top:393.28px;font-size:11px;color:#333;font-weight:normal;letter-spacing:0.176px;">Meyer Hubert, S...</div><div class="a" style="left:342px;top:410px;width:924px;height:23px;background:#f8f8f8"></div><div class="a" style="left:342px;top:433px;width:924px;height:1px;background:#e6e6e6"></div><svg style="left:349px;top:419px" width="11" height="7" viewBox="0 0 11 7"><path d="M1 1 L5.5 5.3 L10 1" fill="none" stroke="#9a9a9a" stroke-width="1"/></svg><svg style="left:365px;top:413px" width="16" height="16" viewBox="0 0 16 16"><g fill="none" stroke="#f47b20" stroke-width="1.3"><path d="M0.65 5 V0.65 H4.9 V2.3"/><path d="M2.4 2.3 H15.35 V5"/><path d="M0.65 5.6 H15.35 L14.7 15.3 H1.3 Z"/><path d="M4.3 8.6 H11.8"/></g></svg><div class="t" style="left:385.20px;top:417.28px;font-size:11px;color:#333;font-weight:normal;letter-spacing:0.106px;">8 Greengate Energy</div><div class="t" style="left:647.10px;top:417.28px;font-size:11px;color:#333;font-weight:normal;letter-spacing:0.093px;">Greengate Energy</div><div class="t" style="left:896.20px;top:417.28px;font-size:11px;color:#333;font-weight:normal;letter-spacing:0.189px;">Eis Markus</div><svg style="left:1078px;top:415px" width="13" height="13" viewBox="0 0 13 13"><rect x="0.5" y="0.5" width="12" height="12" fill="none" stroke="#e0e0e0"/></svg><div class="a" style="left:342px;top:434px;width:924px;height:23px;background:#fff"></div><div class="a" style="left:342px;top:457px;width:924px;height:1px;background:#e6e6e6"></div><svg style="left:371px;top:440px" width="7" height="11" viewBox="0 0 7 11"><path d="M1 1 L5.2 5.3 L1 9.6" fill="none" stroke="#9a9a9a" stroke-width="1"/></svg><svg style="left:385px;top:437px" width="16" height="16" viewBox="0 0 16 16"><g fill="none" stroke="#f47b20" stroke-width="1.3"><path d="M0.65 5 V0.65 H4.9 V2.3"/><path d="M2.4 2.3 H15.35 V5"/><path d="M0.65 5.6 H15.35 L14.7 15.3 H1.3 Z"/><path d="M4.3 8.6 H11.8"/></g></svg><div class="t" style="left:405.00px;top:441.28px;font-size:11px;color:#333;font-weight:normal;letter-spacing:0.250px;">8.1 Strategieberatung</div><div class="t" style="left:647.10px;top:441.28px;font-size:11px;color:#333;font-weight:normal;letter-spacing:0.093px;">Greengate Energy</div><div class="t" style="left:896.20px;top:441.28px;font-size:11px;color:#333;font-weight:normal;letter-spacing:0.189px;">Eis Markus</div><svg style="left:1078px;top:439px" width="13" height="13" viewBox="0 0 13 13"><rect x="0.5" y="0.5" width="12" height="12" fill="none" stroke="#e0e0e0"/></svg><div class="a" style="left:342px;top:458px;width:924px;height:23px;background:#f8f8f8"></div><div class="a" style="left:342px;top:481px;width:924px;height:1px;background:#e6e6e6"></div><svg style="left:371px;top:464px" width="7" height="11" viewBox="0 0 7 11"><path d="M1 1 L5.2 5.3 L1 9.6" fill="none" stroke="#9a9a9a" stroke-width="1"/></svg><svg style="left:385px;top:461px" width="16" height="16" viewBox="0 0 16 16"><g fill="none" stroke="#f47b20" stroke-width="1.3"><path d="M0.65 5 V0.65 H4.9 V2.3"/><path d="M2.4 2.3 H15.35 V5"/><path d="M0.65 5.6 H15.35 L14.7 15.3 H1.3 Z"/><path d="M4.3 8.6 H11.8"/></g></svg><div class="t" style="left:405.00px;top:465.28px;font-size:11px;color:#333;font-weight:normal;letter-spacing:0.163px;">8.2 IT-Consulting</div><div class="t" style="left:647.10px;top:465.28px;font-size:11px;color:#333;font-weight:normal;letter-spacing:0.093px;">Greengate Energy</div><div class="t" style="left:896.20px;top:465.28px;font-size:11px;color:#333;font-weight:normal;letter-spacing:0.189px;">Eis Markus</div><svg style="left:1078px;top:463px" width="13" height="13" viewBox="0 0 13 13"><rect x="0.5" y="0.5" width="12" height="12" fill="none" stroke="#e0e0e0"/></svg><div class="a" style="left:342px;top:481px;width:924px;height:25px;background:#cfdff2"></div><div class="a" style="left:342px;top:506px;width:924px;height:1px;background:#e6e6e6"></div><svg style="left:386px;top:485px" width="14" height="16" viewBox="0 0 14 16"><rect x="0.75" y="2.5" width="12.5" height="12.8" fill="none" stroke="#4a9ad8" stroke-width="1.3"/><path d="M3.2 3.2 H10.8" stroke="#4a9ad8" stroke-width="1.3"/><path d="M4.6 3 Q4.6 0.8 7 0.8 Q9.4 0.8 9.4 3" fill="none" stroke="#4a9ad8" stroke-width="1.2"/><path d="M3 7.3 H11 M3 9.3 H11 M3 11.3 H8" stroke="#4a9ad8" stroke-width="0.9"/></svg><div class="t" style="left:405.00px;top:489.28px;font-size:11px;color:#333;font-weight:normal;letter-spacing:0.107px;">8.3 Erstgespräch</div><svg style="left:612px;top:485px" width="18" height="18" viewBox="0 0 18 18"><circle cx="9" cy="9" r="7.5" fill="none" stroke="#222" stroke-width="1.4"/><path d="M7 5.4 L12.6 9 L7 12.6 Z" fill="#222"/></svg><div class="t" style="left:647.10px;top:489.28px;font-size:11px;color:#333;font-weight:normal;letter-spacing:0.093px;">Greengate Energy</div><div class="t" style="left:896.20px;top:489.28px;font-size:11px;color:#333;font-weight:normal;letter-spacing:0.189px;">Eis Markus</div><svg style="left:1078px;top:487px" width="13" height="13" viewBox="0 0 13 13"><rect x="0.5" y="0.5" width="12" height="12" fill="none" stroke="#e0e0e0"/></svg><div class="a" style="left:342px;top:507px;width:924px;height:24px;background:#f8f8f8"></div><div class="a" style="left:342px;top:531px;width:924px;height:1px;background:#e6e6e6"></div><svg style="left:386px;top:510px" width="14" height="16" viewBox="0 0 14 16"><rect x="0.75" y="2.5" width="12.5" height="12.8" fill="none" stroke="#4a9ad8" stroke-width="1.3"/><path d="M3.2 3.2 H10.8" stroke="#4a9ad8" stroke-width="1.3"/><path d="M4.6 3 Q4.6 0.8 7 0.8 Q9.4 0.8 9.4 3" fill="none" stroke="#4a9ad8" stroke-width="1.2"/><path d="M3 7.3 H11 M3 9.3 H11 M3 11.3 H8" stroke="#4a9ad8" stroke-width="0.9"/></svg><div class="t" style="left:405.00px;top:514.28px;font-size:11px;color:#333;font-weight:normal;letter-spacing:0.241px;">8.4 Auftragsklärung &amp; Zielsetzung</div><svg style="left:612px;top:510px" width="18" height="18" viewBox="0 0 18 18"><circle cx="9" cy="9" r="7.5" fill="none" stroke="#222" stroke-width="1.4"/><path d="M7 5.4 L12.6 9 L7 12.6 Z" fill="#222"/></svg><div class="t" style="left:647.10px;top:514.28px;font-size:11px;color:#333;font-weight:normal;letter-spacing:0.093px;">Greengate Energy</div><div class="t" style="left:896.20px;top:514.28px;font-size:11px;color:#333;font-weight:normal;letter-spacing:0.189px;">Eis Markus</div><svg style="left:1078px;top:512px" width="13" height="13" viewBox="0 0 13 13"><rect x="0.5" y="0.5" width="12" height="12" fill="none" stroke="#e0e0e0"/></svg><div class="a" style="left:342px;top:532px;width:924px;height:24px;background:#fff"></div><div class="a" style="left:342px;top:556px;width:924px;height:1px;background:#e6e6e6"></div><svg style="left:386px;top:535px" width="14" height="16" viewBox="0 0 14 16"><rect x="0.75" y="2.5" width="12.5" height="12.8" fill="none" stroke="#4a9ad8" stroke-width="1.3"/><path d="M3.2 3.2 H10.8" stroke="#4a9ad8" stroke-width="1.3"/><path d="M4.6 3 Q4.6 0.8 7 0.8 Q9.4 0.8 9.4 3" fill="none" stroke="#4a9ad8" stroke-width="1.2"/><path d="M3 7.3 H11 M3 9.3 H11 M3 11.3 H8" stroke="#4a9ad8" stroke-width="0.9"/></svg><div class="t" style="left:405.00px;top:539.28px;font-size:11px;color:#333;font-weight:normal;letter-spacing:0.250px;">8.5 Angebot</div><svg style="left:612px;top:535px" width="18" height="18" viewBox="0 0 18 18"><circle cx="9" cy="9" r="7.5" fill="none" stroke="#222" stroke-width="1.4"/><path d="M7 5.4 L12.6 9 L7 12.6 Z" fill="#222"/></svg><div class="t" style="left:647.10px;top:539.28px;font-size:11px;color:#333;font-weight:normal;letter-spacing:0.093px;">Greengate Energy</div><div class="t" style="left:896.20px;top:539.28px;font-size:11px;color:#333;font-weight:normal;letter-spacing:0.189px;">Eis Markus</div><svg style="left:1078px;top:537px" width="13" height="13" viewBox="0 0 13 13"><rect x="0.5" y="0.5" width="12" height="12" fill="none" stroke="#e0e0e0"/></svg><div class="a" style="left:342px;top:557px;width:924px;height:24px;background:#f8f8f8"></div><div class="a" style="left:342px;top:581px;width:924px;height:1px;background:#e6e6e6"></div><svg style="left:386px;top:560px" width="14" height="16" viewBox="0 0 14 16"><rect x="0.75" y="2.5" width="12.5" height="12.8" fill="none" stroke="#4a9ad8" stroke-width="1.3"/><path d="M3.2 3.2 H10.8" stroke="#4a9ad8" stroke-width="1.3"/><path d="M4.6 3 Q4.6 0.8 7 0.8 Q9.4 0.8 9.4 3" fill="none" stroke="#4a9ad8" stroke-width="1.2"/><path d="M3 7.3 H11 M3 9.3 H11 M3 11.3 H8" stroke="#4a9ad8" stroke-width="0.9"/></svg><div class="t" style="left:405.00px;top:564.28px;font-size:11px;color:#333;font-weight:normal;letter-spacing:0.014px;">8.6 Ist-Analyse</div><svg style="left:612px;top:560px" width="18" height="18" viewBox="0 0 18 18"><circle cx="9" cy="9" r="7.5" fill="none" stroke="#222" stroke-width="1.4"/><path d="M7 5.4 L12.6 9 L7 12.6 Z" fill="#222"/></svg><div class="t" style="left:647.10px;top:564.28px;font-size:11px;color:#333;font-weight:normal;letter-spacing:0.093px;">Greengate Energy</div><div class="t" style="left:896.20px;top:564.28px;font-size:11px;color:#333;font-weight:normal;letter-spacing:0.189px;">Eis Markus</div><svg style="left:1078px;top:562px" width="13" height="13" viewBox="0 0 13 13"><rect x="0.5" y="0.5" width="12" height="12" fill="none" stroke="#e0e0e0"/></svg><div class="a" style="left:342px;top:582px;width:924px;height:24px;background:#fff"></div><div class="a" style="left:342px;top:606px;width:924px;height:1px;background:#e6e6e6"></div><svg style="left:386px;top:585px" width="14" height="16" viewBox="0 0 14 16"><rect x="0.75" y="2.5" width="12.5" height="12.8" fill="none" stroke="#4a9ad8" stroke-width="1.3"/><path d="M3.2 3.2 H10.8" stroke="#4a9ad8" stroke-width="1.3"/><path d="M4.6 3 Q4.6 0.8 7 0.8 Q9.4 0.8 9.4 3" fill="none" stroke="#4a9ad8" stroke-width="1.2"/><path d="M3 7.3 H11 M3 9.3 H11 M3 11.3 H8" stroke="#4a9ad8" stroke-width="0.9"/></svg><div class="t" style="left:405.00px;top:589.28px;font-size:11px;color:#333;font-weight:normal;letter-spacing:0.241px;">8.7 Präsentationen</div><svg style="left:612px;top:585px" width="18" height="18" viewBox="0 0 18 18"><circle cx="9" cy="9" r="7.5" fill="none" stroke="#222" stroke-width="1.4"/><path d="M7 5.4 L12.6 9 L7 12.6 Z" fill="#222"/></svg><div class="t" style="left:647.10px;top:589.28px;font-size:11px;color:#333;font-weight:normal;letter-spacing:0.093px;">Greengate Energy</div><div class="t" style="left:896.20px;top:589.28px;font-size:11px;color:#333;font-weight:normal;letter-spacing:0.189px;">Eis Markus</div><svg style="left:1078px;top:587px" width="13" height="13" viewBox="0 0 13 13"><rect x="0.5" y="0.5" width="12" height="12" fill="none" stroke="#e0e0e0"/></svg><div class="a" style="left:342px;top:607px;width:924px;height:23px;background:#f8f8f8"></div><div class="a" style="left:342px;top:630px;width:924px;height:1px;background:#e6e6e6"></div><svg style="left:351px;top:613px" width="7" height="11" viewBox="0 0 7 11"><path d="M1 1 L5.2 5.3 L1 9.6" fill="none" stroke="#9a9a9a" stroke-width="1"/></svg><svg style="left:365px;top:610px" width="16" height="16" viewBox="0 0 16 16"><g fill="none" stroke="#f47b20" stroke-width="1.3"><path d="M0.65 5 V0.65 H4.9 V2.3"/><path d="M2.4 2.3 H15.35 V5"/><path d="M0.65 5.6 H15.35 L14.7 15.3 H1.3 Z"/><path d="M4.3 8.6 H11.8"/></g></svg><div class="t" style="left:385.20px;top:614.28px;font-size:11px;color:#333;font-weight:normal;letter-spacing:0.047px;">9 Saveurs Fleury</div><div class="t" style="left:647.10px;top:614.28px;font-size:11px;color:#333;font-weight:normal;letter-spacing:0.038px;">Saveurs Fleury</div><svg style="left:1078px;top:612px" width="13" height="13" viewBox="0 0 13 13"><rect x="0.5" y="0.5" width="12" height="12" fill="none" stroke="#e0e0e0"/></svg><div class="a" style="left:342px;top:631px;width:924px;height:23px;background:#fff"></div><div class="a" style="left:342px;top:654px;width:924px;height:1px;background:#e6e6e6"></div><svg style="left:351px;top:637px" width="7" height="11" viewBox="0 0 7 11"><path d="M1 1 L5.2 5.3 L1 9.6" fill="none" stroke="#9a9a9a" stroke-width="1"/></svg><svg style="left:365px;top:634px" width="16" height="16" viewBox="0 0 16 16"><g fill="none" stroke="#bdbdbd" stroke-width="1.3"><path d="M0.65 5 V0.65 H4.9 V2.3"/><path d="M2.4 2.3 H15.35 V5"/><path d="M0.65 5.6 H15.35 L14.7 15.3 H1.3 Z"/><path d="M4.3 8.6 H10"/></g><rect x="8" y="11" width="6" height="4.6" fill="#fff" stroke="#f39a5a" stroke-width="1.2"/><path d="M12 11 V9.5 Q12 7.8 13.5 7.8 Q15 7.8 15 9.5" fill="none" stroke="#f39a5a" stroke-width="1.1"/><path d="M10 13.3 H12" stroke="#f39a5a" stroke-width="1"/></svg><div class="t" style="left:384.20px;top:638.28px;font-size:11px;color:#333;font-weight:normal;letter-spacing:0.093px;">10 Johann Berger</div><div class="t" style="left:646.40px;top:638.28px;font-size:11px;color:#333;font-weight:normal;letter-spacing:0.142px;">Johann Berger</div><div class="t" style="left:896.30px;top:638.28px;font-size:11px;color:#333;font-weight:normal;letter-spacing:0.107px;">Kaiser Sebastian</div><svg style="left:1078px;top:636px" width="13" height="13" viewBox="0 0 13 13"><rect x="0.5" y="0.5" width="12" height="12" fill="none" stroke="#e0e0e0"/><path d="M3 6.5 L5.5 9 L10 3.5" fill="none" stroke="#d0d0d0" stroke-width="1.1"/></svg><div class="t" style="left:1126.20px;top:638.28px;font-size:11px;color:#333;font-weight:normal;letter-spacing:0.194px;">Meyer Hubert, K...</div><div class="a" style="left:342px;top:655px;width:924px;height:23px;background:#f8f8f8"></div><div class="a" style="left:342px;top:678px;width:924px;height:1px;background:#e6e6e6"></div><svg style="left:351px;top:661px" width="7" height="11" viewBox="0 0 7 11"><path d="M1 1 L5.2 5.3 L1 9.6" fill="none" stroke="#9a9a9a" stroke-width="1"/></svg><svg style="left:365px;top:658px" width="16" height="16" viewBox="0 0 16 16"><g fill="none" stroke="#f47b20" stroke-width="1.3"><path d="M0.65 5 V0.65 H4.9 V2.3"/><path d="M2.4 2.3 H15.35 V5"/><path d="M0.65 5.6 H15.35 L14.7 15.3 H1.3 Z"/><path d="M4.3 8.6 H11.8"/></g></svg><div class="t" style="left:384.20px;top:662.28px;font-size:11px;color:#333;font-weight:normal;letter-spacing:0.156px;">13 Berger &amp; Söhne</div><svg style="left:1078px;top:660px" width="13" height="13" viewBox="0 0 13 13"><rect x="0.5" y="0.5" width="12" height="12" fill="none" stroke="#e0e0e0"/></svg><div class="a" style="left:342px;top:679px;width:924px;height:23px;background:#fff"></div><div class="a" style="left:342px;top:702px;width:924px;height:1px;background:#e6e6e6"></div><svg style="left:351px;top:685px" width="7" height="11" viewBox="0 0 7 11"><path d="M1 1 L5.2 5.3 L1 9.6" fill="none" stroke="#9a9a9a" stroke-width="1"/></svg><svg style="left:365px;top:682px" width="16" height="16" viewBox="0 0 16 16"><g fill="none" stroke="#f47b20" stroke-width="1.3"><path d="M0.65 5 V0.65 H4.9 V2.3"/><path d="M2.4 2.3 H15.35 V5"/><path d="M0.65 5.6 H15.35 L14.7 15.3 H1.3 Z"/><path d="M4.3 8.6 H11.8"/></g></svg><div class="t" style="left:384.20px;top:686.28px;font-size:11px;color:#333;font-weight:normal;letter-spacing:0.219px;">14 Objekt Am Eisernen Tor 1</div><svg style="left:1078px;top:684px" width="13" height="13" viewBox="0 0 13 13"><rect x="0.5" y="0.5" width="12" height="12" fill="none" stroke="#e0e0e0"/></svg><div class="a" style="left:342px;top:703px;width:924px;height:23px;background:#f8f8f8"></div><div class="a" style="left:342px;top:726px;width:924px;height:1px;background:#e6e6e6"></div><svg style="left:351px;top:709px" width="7" height="11" viewBox="0 0 7 11"><path d="M1 1 L5.2 5.3 L1 9.6" fill="none" stroke="#9a9a9a" stroke-width="1"/></svg><svg style="left:365px;top:706px" width="16" height="16" viewBox="0 0 16 16"><g fill="none" stroke="#f47b20" stroke-width="1.3"><path d="M0.65 5 V0.65 H4.9 V2.3"/><path d="M2.4 2.3 H15.35 V5"/><path d="M0.65 5.6 H15.35 L14.7 15.3 H1.3 Z"/><path d="M4.3 8.6 H11.8"/></g></svg><div class="t" style="left:384.20px;top:710.28px;font-size:11px;color:#333;font-weight:normal;letter-spacing:0.379px;">15 Trinkl Group</div><div class="t" style="left:647.10px;top:710.28px;font-size:11px;color:#333;font-weight:normal;letter-spacing:0.345px;">Trinkl Group</div><div class="t" style="left:896.30px;top:710.28px;font-size:11px;color:#333;font-weight:normal;letter-spacing:0.317px;">Bachmann Iris</div><svg style="left:1078px;top:708px" width="13" height="13" viewBox="0 0 13 13"><rect x="0.5" y="0.5" width="12" height="12" fill="none" stroke="#e0e0e0"/></svg><div class="a" style="left:643px;top:241px;width:1px;height:485px;background:#cfcfcf"></div><div class="a" style="left:1266px;top:241px;width:17px;height:485px;background:#f1f1f1"></div><div class="a" style="left:1268px;top:258px;width:13px;height:284px;background:#c1c1c1"></div><svg style="left:1269px;top:246px" width="11" height="7" viewBox="0 0 11 7"><path d="M1 6 L5.5 1.5 L10 6 Z" fill="#a3a3a3"/></svg><svg style="left:1269px;top:713px" width="11" height="7" viewBox="0 0 11 7"><path d="M1 1 L5.5 5.5 L10 1 Z" fill="#505050"/></svg><div class="a" style="left:342px;top:726px;width:924px;height:17px;background:#f1f1f1"></div><div class="a" style="left:1266px;top:726px;width:17px;height:17px;background:#fff"></div><svg style="left:347px;top:729px" width="7" height="11" viewBox="0 0 7 11"><path d="M5.5 1.5 L1 5.5 L5.5 9.5 Z" fill="#a3a3a3"/></svg><svg style="left:630px;top:729px" width="7" height="11" viewBox="0 0 7 11"><path d="M1 1 L5.5 5.5 L1 10 Z" fill="#a3a3a3"/></svg><div class="a" style="left:643px;top:726px;width:1px;height:17px;background:#cfcfcf"></div><svg style="left:651px;top:729px" width="7" height="11" viewBox="0 0 7 11"><path d="M5.5 1.5 L1 5.5 L5.5 9.5 Z" fill="#a3a3a3"/></svg><div class="a" style="left:661px;top:728px;width:142px;height:13px;background:#c1c1c1"></div><svg style="left:1255px;top:729px" width="7" height="11" viewBox="0 0 7 11"><path d="M1 1 L5.5 5.5 L1 10 Z" fill="#505050"/></svg><svg style="left:1284px;top:438px" width="6" height="12" viewBox="0 0 6 12"><path d="M1.5 1.5 L4.5 6 L1.5 10.5" fill="none" stroke="#d0d0d0" stroke-width="1"/></svg><div class="a" style="left:1291px;top:145px;width:385px;height:598px;background:#fff;border:1px solid #c9c9c9;border-right:none"></div><div class="a" style="left:1292px;top:146px;width:384px;height:40px;background:#f4f4f4"></div><div class="t" style="left:1301.60px;top:158.29px;font-size:15px;color:#5b8fd6;font-weight:normal;letter-spacing:-0.233px;">Details</div><svg style="left:1653px;top:157px" width="18" height="18" viewBox="0 0 18 18"><circle cx="9" cy="9" r="7.8" fill="none" stroke="#999" stroke-width="1"/><path d="M7.2 4.8 L11.4 9 L7.2 13.2" fill="none" stroke="#999" stroke-width="1"/></svg><div class="a" style="left:1302.6px;top:200px;width:9.7px;height:1px;background:#cfcfcf"></div><svg style="left:1317px;top:196px" width="13" height="8" viewBox="0 0 13 8"><path d="M1 1.5 L6 6.5 L11 1.5" fill="none" stroke="#aaa" stroke-width="1"/></svg><div class="t" style="left:1335.50px;top:193.14px;font-size:14px;color:#333;font-weight:normal;letter-spacing:0.210px;">Allgemeines</div><div class="a" style="left:1417.2px;top:200px;width:227.0999999999999px;height:1px;background:#cfcfcf"></div><div class="a" style="left:1302.6px;top:224px;width:9.7px;height:1px;background:#cfcfcf"></div><svg style="left:1317px;top:220px" width="13" height="8" viewBox="0 0 13 8"><path d="M1 1.5 L6 6.5 L11 1.5" fill="none" stroke="#aaa" stroke-width="1"/></svg><div class="t" style="left:1334.50px;top:217.14px;font-size:14px;color:#333;font-weight:normal;letter-spacing:0.490px;">Bemerkungen</div><div class="a" style="left:1430px;top:224px;width:214.29999999999995px;height:1px;background:#cfcfcf"></div><div class="a" style="left:1302.6px;top:248px;width:9.7px;height:1px;background:#cfcfcf"></div><svg style="left:1317px;top:244px" width="13" height="8" viewBox="0 0 13 8"><path d="M1 1.5 L6 6.5 L11 1.5" fill="none" stroke="#aaa" stroke-width="1"/></svg><div class="t" style="left:1334.50px;top:241.14px;font-size:14px;color:#333;font-weight:normal;letter-spacing:0.283px;">Details</div><div class="a" style="left:1383.3px;top:248px;width:261.0px;height:1px;background:#cfcfcf"></div><div class="a" style="left:1302.6px;top:272px;width:9.7px;height:1px;background:#cfcfcf"></div><svg style="left:1317px;top:268px" width="13" height="8" viewBox="0 0 13 8"><path d="M1 1.5 L6 6.5 L11 1.5" fill="none" stroke="#aaa" stroke-width="1"/></svg><div class="t" style="left:1334.50px;top:265.14px;font-size:14px;color:#333;font-weight:normal;letter-spacing:0.361px;">Benutzerdefinierte Eigenschaften</div><div class="a" style="left:1555.3px;top:272px;width:89.0px;height:1px;background:#cfcfcf"></div><div class="a" style="left:1302px;top:296px;width:343px;height:205px;border:1px solid #cfcfcf;border-top:none"></div><div class="a" style="left:1302px;top:296px;width:11px;height:1px;background:#cfcfcf"></div><svg style="left:1317px;top:290px" width="13" height="8" viewBox="0 0 13 8"><path d="M1 6.5 L6 1.5 L11 6.5" fill="none" stroke="#aaa" stroke-width="1"/></svg><div class="t" style="left:1334.50px;top:289.14px;font-size:14px;color:#333;font-weight:normal;letter-spacing:0.286px;">Finanzen</div><div class="a" style="left:1397.1px;top:296px;width:247.20000000000005px;height:1px;background:#cfcfcf"></div><div class="t" style="left:1313.10px;top:312.79px;font-size:13px;color:#333;font-weight:normal;letter-spacing:0.425px;">Verrechenbar:</div><svg style="left:1619px;top:307px" width="13" height="13" viewBox="0 0 13 13"><rect x="0.5" y="0.5" width="12" height="12" fill="#fff" stroke="#9a9a9a"/><path d="M2.3 6.3 L5.2 9.6 L11 2.2" fill="none" stroke="#888" stroke-width="1.4"/></svg><div class="t" style="left:1313.10px;top:349.39px;font-size:13px;color:#333;font-weight:normal;letter-spacing:0.364px;">Verrechenbar für bestehende Zeitbuchungen über</div><svg style="left:1619px;top:344px" width="13" height="13" viewBox="0 0 13 13"><rect x="0.5" y="0.5" width="12" height="12" fill="#fff" stroke="#999"/></svg><div class="a" style="left:1313px;top:380px;width:320px;height:1px;background:#dedede"></div><div class="t" style="left:1312.10px;top:389.99px;font-size:13px;color:#333;font-weight:normal;letter-spacing:0.412px;">Interne Kosten pro</div><div class="t" style="left:1312.10px;top:406.99px;font-size:13px;color:#333;font-weight:normal;letter-spacing:0.583px;">Stunde:</div><div class="a" style="left:1438px;top:384px;width:196px;height:25px;background:#fff;border:1px solid #c9c9c9"></div><div class="t" style="left:1445.60px;top:390.49px;font-size:13px;color:#333;font-weight:normal;letter-spacing:0.125px;">50.00</div><svg style="left:1617px;top:388px" width="10" height="16" viewBox="0 0 10 16"><path d="M1 6 L5 2 L9 6 M1 10 L5 14 L9 10" fill="none" stroke="#999" stroke-width="1"/></svg><div class="t" style="left:1312.10px;top:435.99px;font-size:13px;color:#333;font-weight:normal;letter-spacing:0.382px;">Umsatz pro Stunde:</div><div class="a" style="left:1438px;top:430px;width:196px;height:25px;background:#fff;border:1px solid #5b8fd6"></div><div class="t" style="left:1445.60px;top:436.49px;font-size:13px;color:#333;font-weight:normal;letter-spacing:0.125px;">50.00</div><svg style="left:1617px;top:434px" width="10" height="16" viewBox="0 0 10 16"><path d="M1 6 L5 2 L9 6 M1 10 L5 14 L9 10" fill="none" stroke="#999" stroke-width="1"/></svg><div class="t" style="left:1312.10px;top:468.99px;font-size:13px;color:#333;font-weight:normal;letter-spacing:0.364px;">Stundensätze für bestehende Zeitbuchungen über</div><svg style="left:1619px;top:464px" width="13" height="13" viewBox="0 0 13 13"><rect x="0.5" y="0.5" width="12" height="12" fill="#fff" stroke="#999"/></svg><div class="a" style="left:1298px;top:696px;width:222px;height:40px;background:#5e9e22;border-radius:3px"></div><div class="t" style="left:1380.20px;top:708.99px;font-size:13px;color:#fff;font-weight:normal;letter-spacing:-0.200px;">Speichern</div><div class="a" style="left:1526px;top:696px;width:148px;height:40px;background:#e6e6e6;border-radius:3px"></div><div class="t" style="left:1572.00px;top:708.99px;font-size:13px;color:#555;font-weight:normal;letter-spacing:-0.262px;">Schließen</div></body></html>
